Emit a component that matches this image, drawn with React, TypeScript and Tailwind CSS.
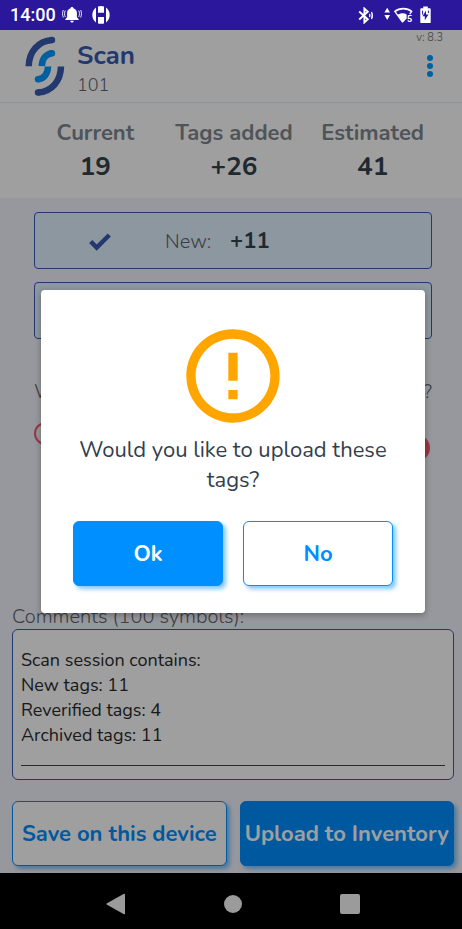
import type { ReactNode } from "react";

function BellIcon() {
  return (
    <svg width="20" height="16" viewBox="0 0 20 16" fill="none" aria-hidden="true">
      <path d="M10 0c.8 0 1.400.5 1.400 1.300 2.200.6 3.500 2.300 3.500 4.700v4.200l1.700 1.900v.9H3.400v-.9l1.700-1.900V6c0-2.400 1.300-4.100 3.500-4.700C8.600.5 9.200 0 10 0zM8.300 13.700h3.400c0 1-.7 1.800-1.700 1.800s-1.700-.8-1.700-1.800z" fill="#fff" />
      <path d="M3.300 3.500c-1 2-1 4.500 0 6.500M1.300 3c-1 2.300-1 5.200 0 7.500M16.700 3.500c1 2 1 4.500 0 6.500M18.700 3c1 2.300 1 5.200 0 7.500" stroke="#fff" strokeWidth="0.900" />
    </svg>
  );
}

function HIcon() {
  return (
    <svg width="18" height="18" viewBox="0 0 18 18" fill="#fff" aria-hidden="true">
      <path d="M4 1.600v14.800C1.700 14.800.3 12.100.3 9S1.700 3.200 4 1.600z" />
      <path d="M14 1.600v14.800c2.300-1.600 3.700-4.300 3.700-7.400s-1.400-5.800-3.700-7.400z" />
      <path d="M6 .6c1.900-.7 4.100-.7 6 0v6.200H6zM6 11h6v6.400c-1.900.6-4.100.6-6 0z" />
    </svg>
  );
}

function BluetoothIcon() {
  return (
    <svg width="16" height="17" viewBox="0 0 16 17" fill="none" stroke="#fff" strokeWidth="1.900" aria-hidden="true">
      <path d="M1.200 4.500l8.600 7.700-3.400 3.200V1.600l3.400 3.200-8.600 7.700" />
      <path d="M11.500 6.900c.5 1 .5 2.200 0 3.200M13.500 5c1.100 2.200 1.100 4.800 0 7" strokeWidth="1.300" />
    </svg>
  );
}

function WifiIcon() {
  return (
    <svg width="29" height="17" viewBox="0 0 29 17" fill="none" aria-hidden="true">
      <path d="M3.200.8L6 5.600H.4zM3.200 13L.4 8h5.600z" fill="#fff" />
      <path d="M10.600 4.600c5-4 12.500-4 17.300 0" stroke="#fff" strokeWidth="1.600" />
      <path d="M10.600 4.200l8 10.800M28 4.200l-2.300 3" stroke="#fff" strokeWidth="1.300" />
      <path d="M13.300 8.200c3-2.300 7-2.300 9.300-.8v4L18.700 15.800z" fill="#fff" />
      <text x="23" y="15" fill="#fff" fontSize="9" fontWeight="700" fontFamily="Roboto, sans-serif">5</text>
    </svg>
  );
}

function BatteryIcon() {
  return (
    <svg width="11" height="18" viewBox="0 0 11 18" aria-hidden="true">
      <path d="M3.200.5h4.600v1.800h2c.5 0 .9.400.9.900v13c0 .5-.4.900-.9.900H1.200c-.5 0-.9-.4-.9-.9v-13c0-.5.4-.9.900-.9h2z" fill="#fff" />
      <path d="M6 4.500L2.500 10.200h2.300v4L8.500 8.600H6z" fill="#2a179b" />
      <path d="M2.600 4.600v4M8.400 4.600v2.500" stroke="#2a179b" strokeWidth="1" />
    </svg>
  );
}

function Logo() {
  return (
    <svg width="40" height="60" viewBox="25 36 40 60" fill="none" aria-hidden="true">
      <g strokeWidth="6.500">
        <path d="M28.700 66.200C29 52 38 41 52 40" stroke="#385bb0" />
        <path d="M61 66.500C60.700 81 52 91.500 38 92.500" stroke="#385bb0" />
        <path d="M41.800 66.200C42 58.500 46 54 52 53.200" stroke="#0098ff" />
        <path d="M48 66.500C47.800 74 44 78.500 38 79.300" stroke="#0098ff" />
      </g>
      <circle cx="52" cy="40" r="3.200" fill="#385bb0" />
      <circle cx="38" cy="92.500" r="3.200" fill="#385bb0" />
      <circle cx="52" cy="53.200" r="3.200" fill="#0098ff" />
      <circle cx="38" cy="79.300" r="3.200" fill="#0098ff" />
    </svg>
  );
}

function Stat({ label, value }: { label: string; value: string }) {
  return (
    <div className="text-center whitespace-nowrap">
      <div className="text-[22px] leading-8 font-bold text-[#7f878f]">{label}</div>
      <div className="text-[26px] leading-9 font-bold text-[#33424d]">{value}</div>
    </div>
  );
}

function ActionButton({ filled, children }: { filled?: boolean; children: ReactNode }) {
  const tone = filled ? "bg-[#008fff] text-white" : "bg-white text-[#008fff]";
  return (
    <button
      type="button"
      className={`h-[65px] min-w-0 flex-1 rounded-md border border-[#008fff] pt-[2px] text-[22px] font-bold whitespace-nowrap shadow-[3px_3px_4px_rgba(0,143,255,0.5)] ${tone}`}
    >
      {children}
    </button>
  );
}

export default function App() {
  return (
    <div className="flex min-h-screen flex-col bg-black font-['Nunito','Noto_Sans',sans-serif]">
      <div className="flex h-[30px] items-center bg-[#2a179b] pr-[31px] pl-[10px] text-white">
        <span className="font-[Roboto,sans-serif] text-lg font-medium">14:00</span>
        <span className="ml-[6px] flex items-center gap-[10px]">
          <BellIcon />
          <HIcon />
        </span>
        <span className="ml-auto flex items-center">
          <BluetoothIcon />
          <span className="ml-[10px]"><WifiIcon /></span>
          <span className="ml-[7px]"><BatteryIcon /></span>
        </span>
      </div>

      <div className="relative flex flex-1 flex-col bg-[#f3f4fc]">
        <header className="flex h-[73px] border-b border-[#dcecf8] bg-white pl-[25px]">
          <div className="pt-[6px]"><Logo /></div>
          <div className="pt-2 pl-3">
            <h1 className="text-[26px] leading-9 font-bold text-[#385bb0]">Scan</h1>
            <p className="text-[18px] leading-[22px] font-light text-[#5f666d]">101</p>
          </div>
          <div className="ml-auto flex flex-col items-end pr-[19px]">
            <span className="text-[11px] leading-4 text-[#7f878f]">v: 8.3</span>
            <button type="button" aria-label="Menu" className="mt-[7px] mr-2 flex w-[10px] flex-col items-center gap-[2px] py-[2px]">
              <span className="size-[6px] rounded-full bg-[#0098ff]" />
              <span className="size-[6px] rounded-full bg-[#0098ff]" />
              <span className="size-[6px] rounded-full bg-[#0098ff]" />
            </button>
          </div>
        </header>

        <section className="grid h-[95px] grid-cols-3 bg-white pt-[14px] pr-5 pl-[26px]">
          <Stat label="Current" value="19" />
          <Stat label="Tags added" value="+26" />
          <Stat label="Estimated" value="41" />
        </section>

        <section className="flex flex-col pt-[14px] pr-[30px] pl-[34px]">
          <div className="flex h-[57px] items-center rounded border border-[#385bb0] bg-[#e3f2ff] pt-[2px] pl-[54px]">
            <svg width="22" height="18" viewBox="0 0 22 18" fill="none" stroke="#385bb0" strokeWidth="4.500" aria-hidden="true">
              <path d="M1.700 8.500l6 6L20.300 2" />
            </svg>
            <span className="ml-[54px] w-[65px] text-[20px] font-light text-[#5f666d]">New:</span>
            <span className="text-[22px] font-bold text-[#33424d]">+11</span>
          </div>
          <div className="mt-[13px] h-[57px] rounded border border-[#385bb0] bg-[#e3f2ff]" />
          <div className="mt-[37px] flex justify-between text-[20px] leading-8 font-light text-[#5f666d]">
            <span>W</span>
            <span>?</span>
          </div>
          <div className="mt-[14px] flex h-10 justify-between pr-[2px]">
            <input type="radio" aria-label="First option" className="size-[23px] appearance-none rounded-full border-2 border-[#f4596b]" />
            <button type="button" aria-label="Second option" className="mt-[13px] size-[26px] rounded-full bg-[#f4596b]" />
          </div>
        </section>

        <section className="mt-auto flex flex-col pr-2 pb-[7px] pl-3">
          <label htmlFor="comments" className="text-[20px] leading-6 font-light text-[#5f666d]">Comments (100 symbols):</label>
          <div className="rounded-md border border-[#385bb0] bg-white px-2 pt-[18px] pb-[13px]">
            <textarea
              id="comments"
              rows={4}
              className="block h-[118px] w-full resize-none border-b border-[#404040] bg-transparent text-[18px] leading-[25px] text-[#2a2a2a] outline-none"
              defaultValue={"Scan session contains:\nNew tags: 11\nReverified tags: 4\nArchived tags: 11"}
            />
          </div>
          <div className="mt-[21px] flex gap-[13px]">
            <ActionButton>Save on this device</ActionButton>
            <ActionButton filled>Upload to Inventory</ActionButton>
          </div>
        </section>

        <div className="absolute inset-0 flex items-center bg-black/[0.376] pr-[37px] pl-[41px]">
          <div role="dialog" aria-modal="true" aria-labelledby="question" className="flex w-full flex-col items-center rounded bg-white px-8 pt-[30px] pb-[27px] shadow-[0_2px_6px_rgba(0,0,0,0.3)]">
            <svg width="112" height="112" viewBox="0 0 24 24" fill="#ffa500" aria-hidden="true">
              <path d="M11 15h2v2h-2zm0-8h2v6h-2zm.99-5C6.470 2 2 6.480 2 12s4.470 10 9.990 10C17.520 22 22 17.520 22 12S17.520 2 11.990 2zM12 20c-4.420 0-8-3.580-8-8s3.580-8 8-8 8 3.580 8 8-3.580 8-8 8z" />
            </svg>
            <p id="question" className="mt-[3px] text-center text-[22px] leading-[30px] text-[#333f4d]">Would you like to upload these tags?</p>
            <div className="mt-[26px] flex w-full gap-5">
              <ActionButton filled>Ok</ActionButton>
              <ActionButton>No</ActionButton>
            </div>
          </div>
        </div>
      </div>

      <nav className="flex h-14 items-center justify-center gap-[98px] bg-black pt-[6px] pl-1">
        <button type="button" aria-label="Back">
          <svg width="20" height="22" viewBox="0 0 20 22" fill="#9b9b9b"><path d="M1 10.200L18 .8c.6-.3 1 0 1 .6v19.200c0 .6-.4.900-1 .6L1 11.800c-.7-.4-.7-1.200 0-1.600z" /></svg>
        </button>
        <button type="button" aria-label="Home" className="size-[18px] rounded-full bg-[#9b9b9b]" />
        <button type="button" aria-label="Recents" className="size-5 rounded-xs bg-[#9b9b9b]" />
      </nav>
    </div>
  );
}
